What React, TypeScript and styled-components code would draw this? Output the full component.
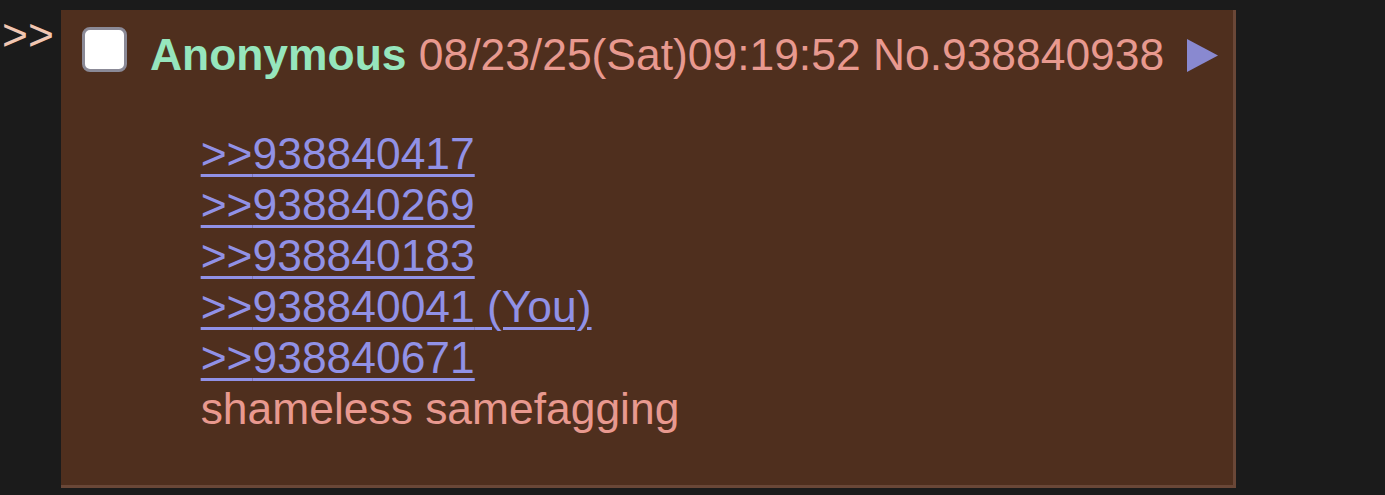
import * as React from 'react'
import styled, { createGlobalStyle } from 'styled-components'

const GlobalStyle = createGlobalStyle`
  html, body {
    margin: 0;
    padding: 0;
    background: #1b1b1b;
  }
  body {
    font-family: "Liberation Sans", Arial, sans-serif;
    font-size: 44.4px;
  }
`

const Thread = styled.div`
  display: flex;
  align-items: flex-start;
  padding-top: 10px;
`

const SideArrows = styled.div`
  width: 61px;
  padding-left: 2px;
  box-sizing: border-box;
  color: #f0c6b2;
  line-height: 51px;
  margin-top: -1px;
`

const Reply = styled.div`
  width: 1175px;
  box-sizing: border-box;
  background: #4f2f1e;
  border-right: 3px solid #6a4737;
  border-bottom: 3px solid #6a4737;
  padding: 6.67px;
`

const PostInfo = styled.div`
  display: flex;
  align-items: flex-start;
  height: 67px;
`

const Checkbox = styled.input.attrs({ type: 'checkbox' })`
  appearance: none;
  margin: 10.3px 0 0 14.3px;
  width: 45px;
  height: 45px;
  box-sizing: border-box;
  border: 3px solid #8b8a97;
  border-radius: 8px;
  background: #ffffff;
`

const Info = styled.span`
  margin: 12.3px 0 0 23px;
  line-height: 51px;
  white-space: nowrap;
`

const Name = styled.span`
  color: #96e6bd;
  font-weight: bold;
`

const DateTime = styled.span`
  color: #e8998f;
`

const MenuArrow = styled.svg`
  margin: 22.3px 0 0 23px;
  flex-shrink: 0;
`

const Message = styled.blockquote`
  margin: 44.4px 133px;
  line-height: 51px;
  color: #e8998f;
`

const QuoteLink = styled.a`
  color: #9191e6;
  text-decoration: underline;
  text-decoration-thickness: 2.7px;
  text-underline-offset: 5px;
`

const quotes = [
  { id: '938840417' },
  { id: '938840269' },
  { id: '938840183' },
  { id: '938840041', you: true },
  { id: '938840671' },
]

export default function App() {
  return (
    <>
      <GlobalStyle />
      <Thread>
        <SideArrows>&gt;&gt;</SideArrows>
        <Reply>
          <PostInfo>
            <Checkbox />
            <Info>
              <Name>Anonymous</Name> <DateTime>08/23/25(Sat)09:19:52 No.938840938</DateTime>
            </Info>
            <MenuArrow width="31" height="33" viewBox="0 0 31 33">
              <polygon points="0,0 31,16.5 0,33" fill="#8989d0" />
            </MenuArrow>
          </PostInfo>
          <Message>
            {quotes.map((q) => (
              <React.Fragment key={q.id}>
                <QuoteLink href="#">
                  &gt;&gt;{q.id}
                  {q.you ? ' (You)' : ''}
                </QuoteLink>
                <br />
              </React.Fragment>
            ))}
            shameless samefagging
          </Message>
        </Reply>
      </Thread>
    </>
  )
}
